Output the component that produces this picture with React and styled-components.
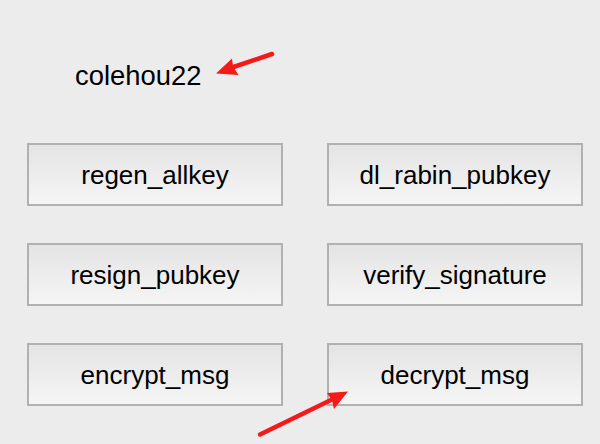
import React from 'react';
import styled, { createGlobalStyle } from 'styled-components';

const GlobalStyle = createGlobalStyle`
  html, body {
    margin: 0;
    padding: 0;
    background: #ececec;
  }
`;

const Page = styled.div`
  position: relative;
  width: 600px;
  height: 444px;
  overflow: hidden;
  background: #ececec;
  font-family: "Liberation Sans", Arial, sans-serif;
  color: #000;
`;

const UserName = styled.div`
  padding: 60px 0 0 75px;
  font-size: 27.4px;
  line-height: 31px;
  height: 31px;
`;

const ButtonGrid = styled.div`
  display: grid;
  grid-template-columns: 256px 256px;
  grid-auto-rows: 63px;
  column-gap: 44px;
  row-gap: 37px;
  padding: 52px 0 0 27px;
`;

const ActionButton = styled.button`
  box-sizing: border-box;
  display: flex;
  align-items: center;
  justify-content: center;
  border: 2px solid #b1b1b1;
  border-radius: 0;
  background: linear-gradient(#e4e4e4, #f5f5f5);
  font-family: "Liberation Sans", Arial, sans-serif;
  font-size: 26px;
  color: #000;
  padding: 2px 0 0;
  margin: 0;
  cursor: pointer;
`;

const Overlay = styled.svg`
  position: absolute;
  left: 0;
  top: 0;
  pointer-events: none;
`;

const actions = [
  'regen_allkey',
  'dl_rabin_pubkey',
  'resign_pubkey',
  'verify_signature',
  'encrypt_msg',
  'decrypt_msg',
];

const App = () => {
  return (
    <Page>
      <GlobalStyle />
      <UserName>colehou22</UserName>
      <ButtonGrid>
        {actions.map((name) => (
          <ActionButton key={name}>{name}</ActionButton>
        ))}
      </ButtonGrid>
      {/* annotation arrows drawn over the window */}
      <Overlay width="600" height="444" viewBox="0 0 600 444">
        <line x1="272" y1="54" x2="232" y2="67.5" stroke="#f41a1a" strokeWidth="4.5" strokeLinecap="round" />
        <polygon points="216,73.5 238.5,75 233,66.5 232,58.5" fill="#f41a1a" />
        <line x1="260" y1="434.5" x2="331" y2="400" stroke="#f41a1a" strokeWidth="4.5" strokeLinecap="round" />
        <polygon points="348,391.5 327,393 332,400.5 334,409" fill="#f41a1a" />
      </Overlay>
    </Page>
  );
};

export default App;
